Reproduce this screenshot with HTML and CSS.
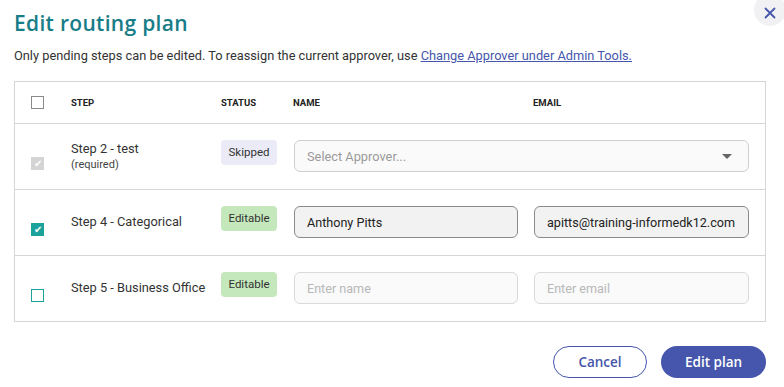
FILE: index.html
```html
<!DOCTYPE html>
<html lang="en">
<head>
    <meta charset="UTF-8">
    <meta name="viewport" content="width=device-width, initial-scale=1.0">
    <title>Edit routing plan</title>
    <link rel="stylesheet" href="styles.css">
</head>
<body>

    <div class="modal">
        <button class="close-btn" aria-label="Close">
            <svg width="12" height="12" viewBox="0 0 12 12">
                <path d="M1.5 1.5 L10.5 10.5 M10.5 1.5 L1.5 10.5" stroke="#4556ac" stroke-width="1.8" stroke-linecap="round"/>
            </svg>
        </button>

        <h1>Edit routing plan</h1>
        <p class="intro">Only pending steps can be edited. To reassign the current approver, use <a href="#">Change Approver under Admin Tools.</a></p>

        <div class="plan-table">
            <!-- Header -->
            <div class="row head">
                <div class="cell check"><span class="box"></span></div>
                <div class="cell">Step</div>
                <div class="cell">Status</div>
                <div class="cell">Name</div>
                <div class="cell">Email</div>
            </div>

            <!-- Step 2 -->
            <div class="row">
                <div class="cell check"><span class="box disabled">&#10004;</span></div>
                <div class="cell step">
                    <div>Step 2 - test</div>
                    <div class="req">(required)</div>
                </div>
                <div class="cell"><span class="badge skipped">Skipped</span></div>
                <div class="cell wide">
                    <div class="select">
                        <span>Select Approver...</span>
                        <span class="caret"></span>
                    </div>
                </div>
            </div>

            <!-- Step 4 -->
            <div class="row">
                <div class="cell check"><span class="box checked">&#10004;</span></div>
                <div class="cell step"><div>Step 4 - Categorical</div></div>
                <div class="cell"><span class="badge editable">Editable</span></div>
                <div class="cell"><input type="text" class="field filled name" value="Anthony Pitts"></div>
                <div class="cell"><input type="text" class="field filled email" value="apitts@training-informedk12.com"></div>
            </div>

            <!-- Step 5 -->
            <div class="row">
                <div class="cell check"><span class="box empty"></span></div>
                <div class="cell step"><div>Step 5 - Business Office</div></div>
                <div class="cell"><span class="badge editable">Editable</span></div>
                <div class="cell"><input type="text" class="field name" placeholder="Enter name"></div>
                <div class="cell"><input type="text" class="field email" placeholder="Enter email"></div>
            </div>
        </div>

        <div class="actions">
            <button class="btn btn-outline">Cancel</button>
            <button class="btn btn-primary">Edit plan</button>
        </div>
    </div>

</body>
</html>
```

FILE: styles.css
```css
:root {
    --teal: #187d87;
    --blue: #4556ac;
    --check: #1ba39b;
    --text-color: #333;
    --line: #d6d6d6;
}

* {
    box-sizing: border-box;
    margin: 0;
    padding: 0;
}

body {
    font-family: Roboto, "Liberation Sans", sans-serif;
    color: var(--text-color);
    background: #fff;
    overflow: hidden;
}

.modal {
    position: relative;
    padding: 0 18px 0 14px;
}

.close-btn {
    position: absolute;
    top: -6px;
    left: 754px;
    width: 32px;
    height: 32px;
    border: none;
    border-radius: 50%;
    background: #f1f1f3;
    display: flex;
    align-items: center;
    justify-content: center;
    padding-top: 6px;
}

h1 {
    font-family: "Open Sans", sans-serif;
    font-weight: 600;
    font-size: 21px;
    line-height: 28px;
    letter-spacing: 0.3px;
    color: var(--teal);
    padding-top: 9px;
}

.intro {
    margin-top: 10px;
    font-size: 12.8px;
    line-height: 18px;
}

.intro a {
    color: var(--blue);
}

.plan-table {
    margin-top: 16px;
    width: 752px;
    border: 1px solid var(--line);
}

.row {
    display: grid;
    grid-template-columns: 56px 150px 72px 240px 232px;
    height: 66px;
    border-top: 1px solid var(--line);
}

.row .cell {
    padding-top: 16px;
}

.row.head {
    height: 41px;
    border-top: none;
    align-items: center;
    font-size: 9.5px;
    font-weight: 700;
    text-transform: uppercase;
    color: #222;
}

.row.head .cell {
    padding-top: 0;
}

.cell.check {
    padding-left: 16px;
}

.row:not(.head) .cell.check {
    padding-top: 33px;
}

.box {
    display: flex;
    align-items: center;
    justify-content: center;
    width: 13px;
    height: 13px;
    border: 1px solid #8a8a8a;
    font-size: 10px;
    color: #fff;
    line-height: 1;
}

.box.disabled {
    background: #d4d4d4;
    border-color: #d4d4d4;
}

.box.checked {
    background: var(--check);
    border-color: var(--check);
}

.box.empty {
    border: 1.5px solid var(--check);
}

.cell.step {
    display: flex;
    flex-direction: column;
    justify-content: center;
    height: 65px;
    padding-top: 16px;
    padding-bottom: 17px;
    font-size: 12.8px;
    line-height: 16px;
}

.req {
    font-size: 11px;
    line-height: 15px;
    color: #444;
}

.badge {
    display: inline-block;
    width: 56px;
    height: 25px;
    line-height: 24px;
    text-align: center;
    border-radius: 4px;
    font-size: 11.5px;
    color: #333;
}

.badge.skipped {
    background: #ebebf8;
}

.badge.editable {
    background: #c4e8bb;
}

.cell.wide {
    grid-column: 4 / 6;
}

.select {
    display: flex;
    align-items: center;
    justify-content: space-between;
    width: 455px;
    height: 32px;
    margin-left: 1px;
    padding: 0 16px 0 12px;
    border: 1px solid #cfcfcf;
    border-radius: 6px;
    background: #fafafa;
    font-size: 12.8px;
    color: #9a9a9a;
}

.caret {
    width: 0;
    height: 0;
    border-left: 5px solid transparent;
    border-right: 5px solid transparent;
    border-top: 5px solid #666;
}

.field {
    display: block;
    height: 32px;
    padding: 0 10px 0 12px;
    border: 1px solid #d9d9d9;
    border-radius: 6px;
    background: #fafafa;
    font-family: inherit;
    font-size: 12.6px;
    color: #222;
}

.field.name {
    width: 224px;
    margin-left: 1px;
}

.field.email {
    width: 215px;
    margin-left: 1px;
}

.field.filled {
    background: #f2f2f2;
    border-color: #8a8a8a;
}

.field::placeholder {
    color: #b8b8b8;
}

.actions {
    display: flex;
    justify-content: flex-end;
    gap: 14px;
    width: 752px;
    margin-top: 24px;
}

.btn {
    height: 32px;
    border-radius: 16px;
    font-family: "Open Sans", sans-serif;
    font-size: 13.5px;
    font-weight: 600;
}

.btn-outline {
    width: 94px;
    background: #fff;
    color: var(--blue);
    border: 1px solid var(--blue);
}

.btn-primary {
    width: 105px;
    background: var(--blue);
    color: #fff;
    border: none;
}
```
